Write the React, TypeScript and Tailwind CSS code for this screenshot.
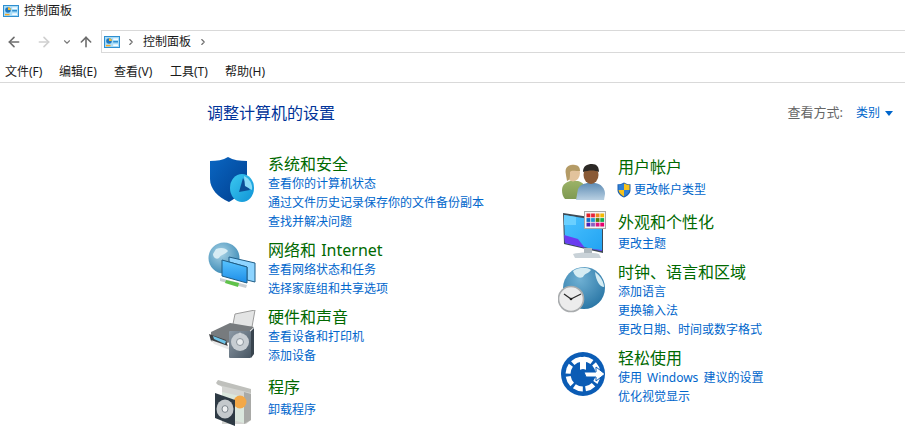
import type { ReactNode } from 'react';
import { ArrowLeft, ArrowRight, ArrowUp, ChevronDown, ChevronRight } from 'lucide-react';

function PanelIcon() {
  return (
    <svg width="16" height="12" viewBox="0 0 16 12" className="shrink-0">
      <rect x="0.5" y="0.5" width="15" height="11" fill="#a9dcf7" stroke="#2f8fd0" />
      <circle cx="5" cy="5" r="2.8" fill="#1f78c0" />
      <path d="M5 5V2.2A2.8 2.8 0 0 1 7.8 5Z" fill="#f7b733" />
      <rect x="9.2" y="2.4" width="4.8" height="1.5" fill="#ffffff" />
      <rect x="9.2" y="5" width="4.8" height="1.5" fill="#2f8fd0" />
      <rect x="2" y="8.9" width="4.5" height="1.4" fill="#f7a823" />
      <rect x="9.2" y="8.4" width="4.8" height="1.5" fill="#ffffff" />
    </svg>
  );
}

function ShieldIcon() {
  return (
    <svg width="48" height="48" viewBox="0 0 48 48">
      <defs>
        <linearGradient id="sh" x1="0" y1="0" x2="1" y2="1">
          <stop offset="0" stopColor="#0a66c2" />
          <stop offset="1" stopColor="#003f8f" />
        </linearGradient>
        <linearGradient id="pie" x1="0" y1="0" x2="1" y2="1">
          <stop offset="0" stopColor="#3cc8f0" />
          <stop offset="1" stopColor="#0f93d6" />
        </linearGradient>
      </defs>
      <path d="M2 6C9 6 15 5 20 2C25 5 32 6 39 6V24C39 34 30 42 21 47C10 42 2 34 2 24Z" fill="url(#sh)" />
      <ellipse cx="34" cy="33" rx="12" ry="14" fill="url(#pie)" />
      <path d="M35 23L31 37L42 35Z" fill="#0b4f97" />
      <path d="M36 21C41 23 45 29 44 35L37 31Z" fill="#8adcf7" />
    </svg>
  );
}

function NetworkIcon() {
  return (
    <svg width="48" height="48" viewBox="0 0 48 48">
      <defs>
        <radialGradient id="gl" cx="0.4" cy="0.35" r="0.8">
          <stop offset="0" stopColor="#a9d3e6" />
          <stop offset="1" stopColor="#2b7fae" />
        </radialGradient>
        <linearGradient id="scr" x1="0" y1="0" x2="0" y2="1">
          <stop offset="0" stopColor="#59c4ff" />
          <stop offset="1" stopColor="#1d8de8" />
        </linearGradient>
      </defs>
      <circle cx="16" cy="16" r="15.5" fill="url(#gl)" />
      <path d="M8 7C13 5 18 6 20 9C17 13 13 12 11 16C8 18 5 15 5 12Z" fill="#d7ecf4" />
      <path d="M21 15L47 21V40L39 38V25L21 20Z" fill="#8ed4ff" stroke="#1f5d86" />
      <path d="M14 18L39 25V41L14 34Z" fill="url(#scr)" stroke="#1f5d86" />
      <path d="M12 36L39 43L38 46L12 39Z" fill="#c9ced2" />
      <path d="M18 38L31 41L30 45L17 41Z" fill="#5fc24a" />
    </svg>
  );
}

function PrinterIcon() {
  return (
    <svg width="48" height="48" viewBox="0 0 48 48">
      <defs>
        <linearGradient id="spk" x1="0" y1="0" x2="1" y2="1">
          <stop offset="0" stopColor="#8d9aa6" />
          <stop offset="1" stopColor="#485663" />
        </linearGradient>
      </defs>
      <path d="M27 4L47 0L44 17L24 19Z" fill="#e3e4e4" stroke="#9c9c9c" />
      <path d="M3 22L22 13L46 17L32 30L14 34L3 29Z" fill="#777b7e" />
      <path d="M1 24L18 30L20 37L3 31Z" fill="#3c3f42" />
      <path d="M5 26L18 31L17 34L6 29Z" fill="#6fc4e8" />
      <path d="M3 30L20 36L22 40L6 34Z" fill="#e8e8e8" />
      <rect x="21" y="21" width="22" height="27" rx="1" fill="url(#spk)" />
      <path d="M43 21L46 18V44L43 48Z" fill="#39444e" />
      <circle cx="32" cy="32" r="9" fill="#c7cdd2" />
      <circle cx="32" cy="32" r="3.5" fill="#e9ecee" stroke="#8b949c" />
      <circle cx="32" cy="24" r="1.5" fill="#cfd4d8" />
    </svg>
  );
}

function ProgramsIcon() {
  return (
    <svg width="48" height="48" viewBox="0 0 48 48">
      <path d="M10 5L43 13V41L38 45H14V8Z" fill="#d4d5d2" />
      <path d="M8 4L10 1L43 10L43 14L10 6Z" fill="#bfc0bc" />
      <path d="M36 13L43 15V41L36 45Z" fill="#a9aaa7" />
      <path d="M14 13L36 18V44L14 38Z" fill="#dbe7dd" />
      <circle cx="32" cy="23" r="6.5" fill="#f2a848" />
      <path d="M7 14L27 21V47L7 39Z" fill="#2e3a44" />
      <ellipse cx="17" cy="30" rx="8.5" ry="9.5" fill="#c4c9cc" />
      <ellipse cx="17" cy="30" rx="3" ry="3.4" fill="#eef0f1" stroke="#7c858c" />
    </svg>
  );
}

function UsersIcon() {
  return (
    <svg width="48" height="48" viewBox="0 0 48 48">
      <defs>
        <linearGradient id="shirtB" x1="0" y1="0" x2="0" y2="1">
          <stop offset="0" stopColor="#5f8db5" />
          <stop offset="1" stopColor="#b9d0e2" />
        </linearGradient>
        <linearGradient id="shirtG" x1="0" y1="0" x2="0" y2="1">
          <stop offset="0" stopColor="#9bb267" />
          <stop offset="1" stopColor="#7f9a52" />
        </linearGradient>
      </defs>
      <path d="M4 32C4 26 9 24 12 23H20C24 24 28 27 28 34L26 41H7C5 39 4 36 4 32Z" fill="url(#shirtG)" />
      <ellipse cx="15" cy="15" rx="7" ry="8.5" fill="#e2c39c" />
      <path d="M8 17C6 8 11 7 16 7C21 7 22 10 22 13C17 13 13 12 12 14C12 20 12 22 9 23Z" fill="#b49b66" />
      <path d="M18 42L20 31C22 27 25 26 29 25H37C43 26 47 30 47 36L46 42Z" fill="url(#shirtB)" />
      <ellipse cx="33" cy="17" rx="7.5" ry="9" fill="#8a5a36" />
      <path d="M25 14C25 8 29 6 34 6C39 6 41 9 41 14C37 12 31 12 25 14Z" fill="#2c2926" />
    </svg>
  );
}

function MonitorIcon() {
  const colors = ['#e31b23', '#e8243c', '#f08a1d', '#f5b800', '#0f6fc6', '#1b9ad6', '#4f7f10', '#12b050', '#4b1fb5', '#8c5fc0', '#e0117f', '#e6006e'];
  return (
    <svg width="48" height="48" viewBox="0 0 48 48">
      <defs>
        <linearGradient id="mon" x1="0" y1="0" x2="1" y2="1">
          <stop offset="0" stopColor="#4cc3ff" />
          <stop offset="1" stopColor="#22a3f2" />
        </linearGradient>
      </defs>
      <path d="M5 2L45 8V42L6 33Z" fill="#3d4a55" />
      <path d="M6 4L44 10V40L7 32Z" fill="url(#mon)" />
      <path d="M6 24L20 28L27 37L7 32Z" fill="#6a3cf0" />
      <path d="M6 4L18 6V14H6Z" fill="#6ad0ff" />
      <path d="M27 37L44 39V40L27 37Z" fill="#6a3cf0" />
      <path d="M15 43C22 41 34 41 41 43L43 47H17Z" fill="#c9d2d8" />
      <path d="M26 37H34V42H26Z" fill="#aeb8be" />
      <rect x="26.5" y="0.5" width="21" height="17" fill="#f4f4f4" stroke="#a7a7a7" />
      {colors.map((c, i) => (
        <rect key={i} x={28.5 + (i % 4) * 4.6} y={2.5 + Math.floor(i / 4) * 4.6} width="3.8" height="3.8" fill={c} />
      ))}
    </svg>
  );
}

function ClockIcon() {
  return (
    <svg width="48" height="48" viewBox="0 0 48 48">
      <defs>
        <radialGradient id="cg" cx="0.4" cy="0.3" r="0.85">
          <stop offset="0" stopColor="#6fb0d3" />
          <stop offset="1" stopColor="#1f6d9e" />
        </radialGradient>
      </defs>
      <circle cx="26" cy="21" r="21" fill="url(#cg)" />
      <path d="M15 4C21 0 29 0 33 3C30 7 27 6 25 10C21 12 17 10 15 4Z" fill="#d5ecf3" />
      <path d="M37 5C43 9 46 16 46 20C42 20 38 14 37 5Z" fill="#d5ecf3" />
      <circle cx="13" cy="32" r="12.5" fill="#ececec" stroke="#a9acae" strokeWidth="1.6" />
      <path d="M13 32L6 27M13 32L23 27" stroke="#2a2a2a" strokeWidth="1.3" fill="none" />
      <circle cx="13" cy="32" r="1.3" fill="#222222" />
    </svg>
  );
}

function EaseIcon() {
  return (
    <svg width="48" height="48" viewBox="0 0 48 48">
      <circle cx="25" cy="24" r="22" fill="#0b5cb5" />
      <circle cx="25" cy="24" r="15" fill="none" stroke="#ffffff" strokeWidth="5" strokeDasharray="9 2.8" />
      <rect x="22" y="7" width="6" height="17" fill="#ffffff" />
      <circle cx="25" cy="25" r="6" fill="#0b5cb5" />
      <path d="M26 22H38V17L47 24L38 31V27H28Z" fill="#ffffff" stroke="#0b5cb5" strokeWidth="1" />
    </svg>
  );
}

function UacShield() {
  return (
    <svg width="14" height="16" viewBox="0 0 14 16" className="shrink-0">
      <path d="M7 0.5C9 1.8 11 2.3 13.5 2.3V8C13.5 11.5 10.5 14 7 15.5C3.5 14 0.5 11.5 0.5 8V2.3C3 2.3 5 1.8 7 0.5Z" fill="#1a5fb0" />
      <path d="M7 1.5V8H1.5V2.8C3.5 2.8 5.5 2.3 7 1.5Z" fill="#2f7fd6" />
      <path d="M7 1.5C8.5 2.3 10.5 2.8 12.5 2.8V8H7Z" fill="#f7c21c" />
      <path d="M7 8H1.5C1.7 10.8 4.3 13 7 14.4Z" fill="#f7c21c" />
      <path d="M7 8H12.5C12.3 10.8 9.7 13 7 14.4Z" fill="#2f7fd6" />
    </svg>
  );
}

function Link({ children }: { children: ReactNode }) {
  return <a className="block h-[19px] text-[12px] leading-[19px] text-[#0066cc] [word-spacing:2px]">{children}</a>;
}

function Category({
  icon,
  title,
  children,
  className,
  iconClass,
}: {
  icon: ReactNode;
  title: string;
  children: ReactNode;
  className: string;
  iconClass: string;
}) {
  return (
    <div className={`flex ${className}`}>
      {/* icons hang over the next row in the original, so they add no height */}
      <div className={`h-0 w-[60px] shrink-0 ${iconClass}`}>{icon}</div>
      <div>
        <h2 className="h-5 text-[16px] font-normal leading-5 text-[#006900] [word-spacing:1px]">{title}</h2>
        {children}
      </div>
    </div>
  );
}

const menus = [
  { label: '文件(F)', cls: 'w-[54px]' },
  { label: '编辑(E)', cls: 'w-[55px]' },
  { label: '查看(V)', cls: 'w-[56px]' },
  { label: '工具(T)', cls: 'w-[55px]' },
  { label: '帮助(H)', cls: 'w-[60px]' },
];

export default function App() {
  return (
    <div className="h-[443px] w-[905px] overflow-hidden bg-white text-[12px] text-[#1a1a1a] [font-family:'Noto_Sans','Noto_Sans_CJK_SC',sans-serif]">
      <div className="flex h-5 items-center gap-[5px] pl-[3px] pt-[1px]">
        <PanelIcon />
        <span className="leading-5">控制面板</span>
      </div>

      <div className="mt-[10px] flex h-[23px] items-center">
        <div className="flex w-[101px] shrink-0 items-center pl-[6px]">
          <ArrowLeft size={16} strokeWidth={2.4} className="text-[#6d6d6d]" />
          <ArrowRight size={16} strokeWidth={2.4} className="ml-[14px] text-[#cfcfcf]" />
          <ChevronDown size={10} strokeWidth={2.6} className="ml-[10px] text-[#7a7a7a]" />
          <ArrowUp size={16} strokeWidth={2.4} className="ml-[6px] text-[#6d6d6d]" />
        </div>
        <div className="flex h-[23px] flex-1 items-center border border-r-0 border-[#d9d9d9] pl-[2px]">
          <PanelIcon />
          <ChevronRight size={10} strokeWidth={2.6} className="ml-[6px] text-[#6d6d6d]" />
          <span className="ml-[7px] leading-5">控制面板</span>
          <ChevronRight size={10} strokeWidth={2.6} className="ml-[7px] text-[#6d6d6d]" />
        </div>
      </div>

      <div className="flex h-[30px] items-end border-b border-[#d9d9d9] pl-[5px]">
        {menus.map((m) => (
          <span key={m.label} className={`h-5 leading-5 ${m.cls}`}>
            {m.label}
          </span>
        ))}
      </div>

      <div className="mt-[18px] flex h-[24px] items-center justify-between pl-[207px] pr-[12px]">
        <h1 className="text-[16px] font-normal leading-6 text-[#003399]">调整计算机的设置</h1>
        <div className="flex items-center">
          <span className="text-[13px] text-[#666666]">查看方式:</span>
          <span className="ml-[13px] text-[#0066cc]">类别</span>
          <span className="ml-[5px] h-0 w-0 border-x-[4px] border-t-[5px] border-x-transparent border-t-[#0066cc]" />
        </div>
      </div>

      <div className="mt-[29px] grid grid-cols-[350px_1fr] pl-[208px]">
        <div>
          <Category icon={<ShieldIcon />} title="系统和安全" className="" iconClass="mt-[1px]">
            <Link>查看你的计算机状态</Link>
            <Link>通过文件历史记录保存你的文件备份副本</Link>
            <Link>查找并解决问题</Link>
          </Category>
          <Category icon={<NetworkIcon />} title="网络和 Internet" className="mt-[9px]" iconClass="mt-[2px]">
            <Link>查看网络状态和任务</Link>
            <Link>选择家庭组和共享选项</Link>
          </Category>
          <Category icon={<PrinterIcon />} title="硬件和声音" className="mt-[9px]" iconClass="mt-[3px]">
            <Link>查看设备和打印机</Link>
            <Link>添加设备</Link>
          </Category>
          <Category icon={<ProgramsIcon />} title="程序" className="mt-[12px]" iconClass="mt-[2px]">
            <div className="mt-[3px]">
              <Link>卸载程序</Link>
            </div>
          </Category>
        </div>

        <div className="pt-[3px]">
          <Category icon={<UsersIcon />} title="用户帐户" className="" iconClass="mt-[1px]">
            <div className="-ml-px mt-[3px] flex h-[19px] items-center gap-[3px]">
              <UacShield />
              <Link>更改帐户类型</Link>
            </div>
          </Category>
          <Category icon={<MonitorIcon />} title="外观和个性化" className="mt-[13px]" iconClass="mt-[-1px]">
            <div className="mt-[2px]">
              <Link>更改主题</Link>
            </div>
          </Category>
          <Category icon={<ClockIcon />} title="时钟、语言和区域" className="mt-[9px]" iconClass="mt-[5px]">
            <Link>添加语言</Link>
            <Link>更换输入法</Link>
            <Link>更改日期、时间或数字格式</Link>
          </Category>
          <Category icon={<EaseIcon />} title="轻松使用" className="mt-[9px]" iconClass="mt-[2px]">
            <Link>使用 Windows 建议的设置</Link>
            <Link>优化视觉显示</Link>
          </Category>
        </div>
      </div>
    </div>
  );
}
